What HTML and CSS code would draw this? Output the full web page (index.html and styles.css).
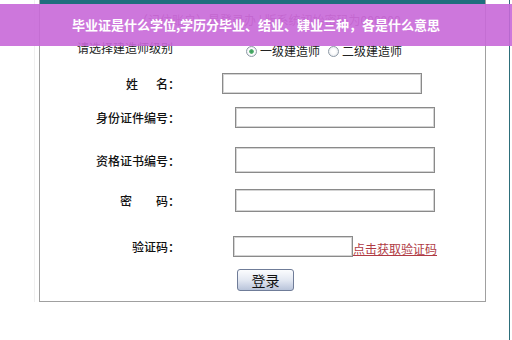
FILE: index.html
```html
<!DOCTYPE html>
<html lang="zh-CN">
<head>
    <meta charset="UTF-8">
    <title>建造师登录</title>
    <link rel="stylesheet" href="styles.css">
</head>
<body>

    <div class="frame">
        <div class="panel">
            <form class="box" id="loginForm">
                <div class="topbar"></div>
                <div class="notice">（记住账户）是登录办 | 版系统初始密码为000000</div>

                <div class="row level-row">
                    <span class="level-label">请选择建造师级别</span>
                    <div class="radio-group">
                        <label><input type="radio" name="level" value="1" checked>一级建造师</label>
                        <label><input type="radio" name="level" value="2">二级建造师</label>
                    </div>
                </div>

                <div class="row row-name">
                    <label class="label" for="userName">姓&emsp;&ensp;名：</label>
                    <input type="text" id="userName" class="field field-name">
                </div>

                <div class="row row-id">
                    <label class="label" for="idNo">身份证件编号：</label>
                    <input type="text" id="idNo" class="field">
                </div>

                <div class="row row-cert">
                    <label class="label" for="certNo">资格证书编号：</label>
                    <input type="text" id="certNo" class="field field-tall">
                </div>

                <div class="row row-pwd">
                    <label class="label" for="pwd">密&emsp;&emsp;码：</label>
                    <input type="password" id="pwd" class="field field-pwd">
                </div>

                <div class="row row-code">
                    <label class="label" for="code">验证码：</label>
                    <input type="text" id="code" class="field field-code">
                    <a href="#" class="code-link">点击获取验证码</a>
                </div>

                <div class="row row-btn">
                    <button type="button" class="btn-login">登录</button>
                </div>
            </form>
        </div>
    </div>

    <div class="banner">毕业证是什么学位,学历分毕业、结业、肄业三种，各是什么意思</div>

</body>
</html>
```

FILE: styles.css
```css
body {
    margin: 0;
    background-color: #ffffff;
    font-family: "Noto Sans CJK SC", "DejaVu Sans", sans-serif;
    font-size: 12px;
    color: #222;
}
.frame {
    width: 510px;
    height: 340px;
    border-right: 1px solid #2d6e7a;
    padding-left: 34px;
    box-sizing: border-box;
}
.panel {
    border-left: 1px solid #f0f0f0;
    padding-left: 4px;
}
.box {
    width: 445px;
    margin: 0;
    border: 1px solid #a0a0a0;
    border-top: none;
    padding-bottom: 10px;
}
.topbar {
    height: 4px;
    background-color: #1f6e7e;
}
.notice {
    height: 34px;
    line-height: 32px;
    padding-left: 96px;
    color: #9a5a7a;
    font-size: 12px;
}
.row {
    display: flex;
    align-items: center;
}
.level-row {
    align-items: flex-start;
    height: 18px;
}
.level-label {
    line-height: 20px;
    margin-left: 37px;
    color: #222;
}
.radio-group {
    display: flex;
    gap: 8px;
    margin-left: 73px;
    margin-top: 4px;
    line-height: 18px;
    color: #222;
}
.radio-group label {
    display: flex;
    align-items: center;
}
.radio-group input {
    appearance: none;
    width: 11px;
    height: 11px;
    margin: 0 3px 0 0;
    border: 1px solid #8e9aa6;
    border-radius: 50%;
    background: radial-gradient(circle, #ffffff 30%, #dfe3e8 100%);
}
.radio-group input:checked {
    background: radial-gradient(circle, #3c9a5c 0, #4fb06c 30%, #ffffff 42%, #dfe3e8 100%);
}
.label {
    width: 140px;
    text-align: right;
    color: #111;
    font-size: 12px;
    font-weight: 500;
}
.field {
    width: 200px;
    height: 21px;
    margin: 0 0 0 55px;
    padding: 0 3px;
    border: 1px solid #8a8a8a;
    box-shadow: inset 0 0 0 1px #d4d4d4;
    box-sizing: border-box;
    font-size: 12px;
}
.row-name {
    margin-top: 17px;
}
.field-name {
    margin-left: 42px;
}
.row-id {
    margin-top: 13px;
}
.row-cert {
    margin-top: 19px;
}
.field-tall {
    height: 26px;
}
.row-pwd {
    margin-top: 16px;
}
.field-pwd {
    height: 23px;
}
.row-code {
    margin-top: 24px;
}
.field-code {
    width: 120px;
    margin-left: 53px;
}
.code-link {
    margin-top: 4px;
    color: #b03a44;
    font-size: 12px;
    text-decoration: underline;
}
.row-btn {
    margin-top: 12px;
}
.btn-login {
    width: 57px;
    height: 22px;
    margin-left: 197px;
    padding: 0;
    border: 1px solid #6f7c98;
    border-radius: 3px;
    background: linear-gradient(#fbfcfe, #e3e8f2 50%, #b9c4da);
    font-family: "Noto Sans CJK SC", sans-serif;
    font-size: 14px;
    color: #111;
    cursor: pointer;
}
.banner {
    position: absolute;
    top: 4px;
    left: 0;
    width: 512px;
    height: 42px;
    line-height: 42px;
    background-color: rgba(200, 104, 216, 0.9);
    color: #ffffff;
    font-size: 13px;
    font-weight: bold;
    text-align: center;
}
```
